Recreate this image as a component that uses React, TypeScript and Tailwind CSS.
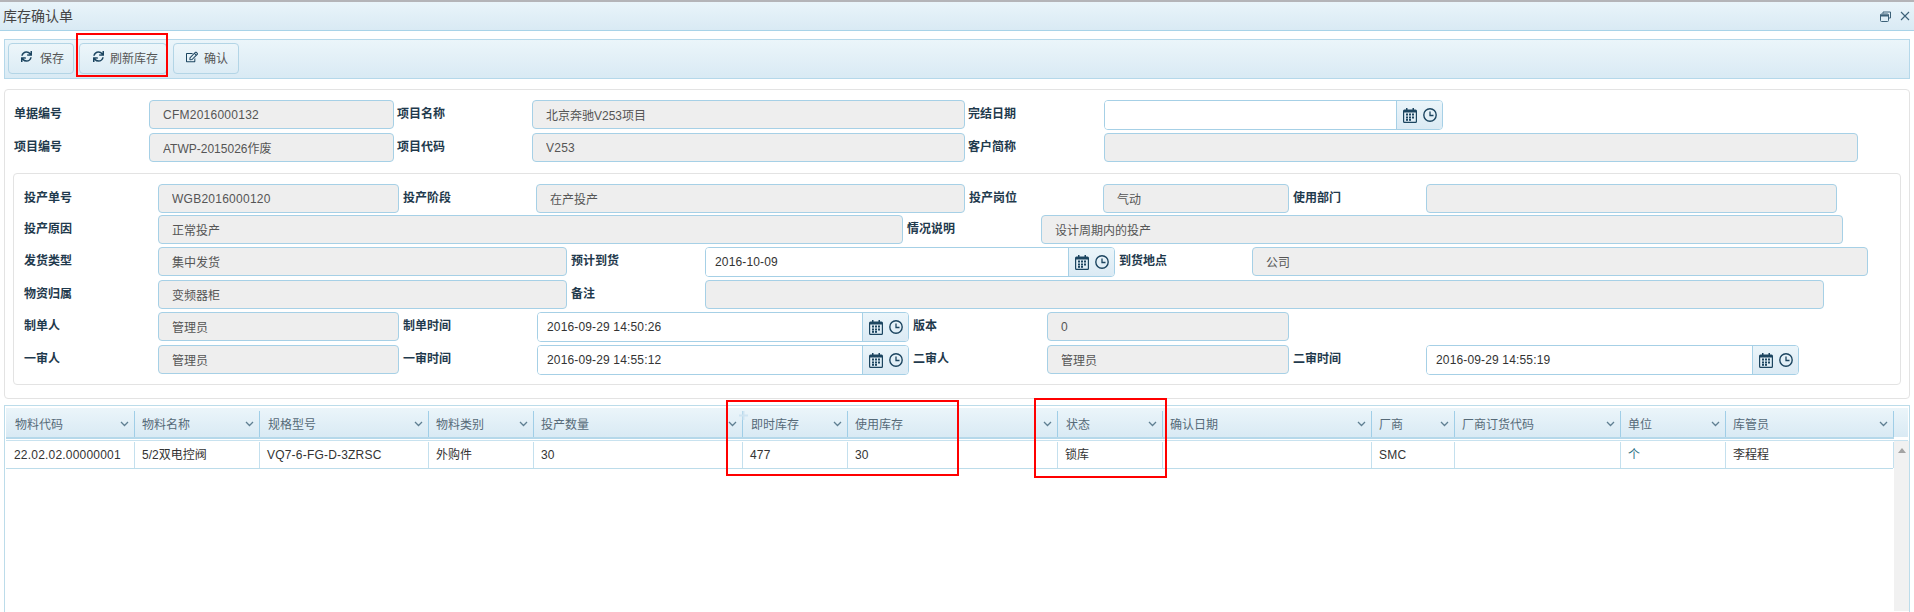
import React from "react";
import { FaSync, FaRegEdit } from "react-icons/fa";

function CalendarIcon() {
  return (
    <svg width="14" height="15" viewBox="0 0 14 15" className="shrink-0 text-[#1c4560]" fill="currentColor">
      <rect x="3" y="0" width="1.5" height="3" />
      <rect x="9.5" y="0" width="1.5" height="3" />
      <path d="M1.5 1.5h11A1.5 1.5 0 0 1 14 3v10.5a1.5 1.5 0 0 1-1.5 1.5h-11A1.5 1.5 0 0 1 0 13.500V3a1.500 1.500 0 0 1 1.500-1.500ZM1.200 4.500V13.300a.5.5 0 0 0 .5.5h10.600a.5.5 0 0 0 .5-.5V4.500Z" fillRule="evenodd" />
      <rect x="3" y="5.500" width="2" height="2" />
      <rect x="6" y="5.500" width="2" height="2" />
      <rect x="9" y="5.500" width="2" height="2" />
      <rect x="3" y="8.500" width="2" height="2" />
      <rect x="6" y="8.500" width="2" height="2" />
      <rect x="9" y="8.500" width="2" height="2" />
      <rect x="3" y="11" width="2" height="1.800" />
      <rect x="6" y="11" width="2" height="1.800" />
    </svg>
  );
}

function ClockIcon() {
  return (
    <svg width="14" height="14" viewBox="0 0 14 14" className="shrink-0 text-[#1c4560]" fill="none" stroke="currentColor">
      <circle cx="7" cy="7" r="6.200" strokeWidth="1.400" />
      <path d="M7 3.500V7.500H10.500" strokeWidth="1.300" />
    </svg>
  );
}

function Chevron() {
  return (
    <svg width="9" height="6" viewBox="0 0 9 6" className="absolute right-[6px] top-[13px] text-[#5f7f92]" fill="none" stroke="currentColor" strokeWidth="1.300">
      <path d="M1 1l3.500 3.500L8 1" />
    </svg>
  );
}

function Label({ className, children }: { className: string; children?: React.ReactNode }) {
  return (
    <label className={`h-[29px] shrink-0 pl-[4px] text-[12px] leading-[28px] font-bold text-[#1f3a4d] whitespace-nowrap ${className}`}>
      {children}
    </label>
  );
}

function Field({ className, value = "", latin = false }: { className: string; value?: string; latin?: boolean }) {
  return (
    <input
      readOnly
      value={value}
      className={`h-[29px] shrink-0 rounded-[4px] border border-[#a6d0e6] bg-[#eeeeee] pl-[13px] text-[12px] text-[#555555] outline-none ${latin ? "tracking-[0.25px]" : ""} ${className}`}
    />
  );
}

function DateField({ className, value = "" }: { className: string; value?: string }) {
  return (
    <div className={`flex h-[30px] shrink-0 overflow-hidden rounded-[4px] border border-[#a6d0e6] bg-white ${className}`}>
      <input
        readOnly
        value={value}
        className="h-full min-w-0 flex-1 bg-white pl-[9px] text-[12px] tracking-[0.15px] text-[#333333] outline-none"
      />
      <div className="flex w-[46px] shrink-0 items-center gap-[6px] border-l border-[#a6d0e6] bg-gradient-to-b from-[#ebf5fa] to-[#dbeaf4] pl-[6px]">
        <CalendarIcon />
        <ClockIcon />
      </div>
    </div>
  );
}

function ToolButton({ className, icon, text }: { className: string; icon: React.ReactNode; text: string }) {
  return (
    <button className={`flex h-[31px] shrink-0 items-center rounded-[4px] border border-[#b3d5e6] bg-gradient-to-b from-[#edf6fa] to-[#dcecf5] text-[12px] text-[#555555] ${className}`}>
      <span className="-translate-y-[2px] text-[#1c4560]">{icon}</span>
      <span>{text}</span>
    </button>
  );
}

const columns = [
  { title: "物料代码", value: "22.02.02.00000001", w: "w-[129px] pl-[8px] text-[#333333]", head: "w-[129px] pl-[9px]", latin: true },
  { title: "物料名称", value: "5/2双电控阀", w: "w-[125px] pl-[7px] text-[#333333]", head: "w-[125px] pl-[7px]" },
  { title: "规格型号", value: "VQ7-6-FG-D-3ZRSC", w: "w-[169px] pl-[7px] text-[#333333]", head: "w-[169px] pl-[8px]", latin: true },
  { title: "物料类别", value: "外购件", w: "w-[105px] pl-[7px] text-[#333333]", head: "w-[105px] pl-[7px]" },
  { title: "投产数量", value: "30", w: "w-[209px] pl-[7px] text-[#333333]", head: "w-[209px] pl-[7px]", latin: true },
  { title: "即时库存", value: "477", w: "w-[105px] pl-[7px] text-[#333333]", head: "w-[105px] pl-[8px]", latin: true, plus: true },
  { title: "使用库存", value: "30", w: "w-[210px] pl-[7px] text-[#333333]", head: "w-[210px] pl-[7px]", latin: true },
  { title: "状态", value: "锁库", w: "w-[105px] pl-[7px] text-[#333333]", head: "w-[105px] pl-[8px]" },
  { title: "确认日期", value: "", w: "w-[209px] pl-[7px] text-[#333333]", head: "w-[209px] pl-[7px]" },
  { title: "厂商", value: "SMC", w: "w-[83px] pl-[7px] text-[#333333]", head: "w-[83px] pl-[7px]", latin: true },
  { title: "厂商订货代码", value: "", w: "w-[166px] pl-[7px] text-[#333333]", head: "w-[166px] pl-[7px]" },
  { title: "单位", value: "个", w: "w-[105px] pl-[7px] text-[#2f7286]", head: "w-[105px] pl-[7px]" },
  { title: "库管员", value: "李程程", w: "w-[168px] pl-[7px] text-[#333333]", head: "w-[168px] pl-[7px]" },
];

export default function App() {
  return (
    <div className="relative h-[612px] w-[1914px] overflow-hidden bg-white font-['Liberation_Sans','Noto_Sans_CJK_SC',sans-serif]">
      <div className="h-[2px] bg-[#b4b4b8]" />
      <header className="flex h-[29px] items-center justify-between border-b border-[#a8d3e8] bg-gradient-to-b from-[#e9f4fa] to-[#d9eaf4] pl-[3px] pr-[4px]">
        <span className="text-[14px] text-[#444444]">库存确认单</span>
        <div className="flex items-center gap-[9px] text-[#3c6178]">
          <svg width="11" height="11" viewBox="0 0 11 11" fill="none" stroke="currentColor">
            <path d="M3 2.500V1h7.500v6H8.500" strokeWidth="1" />
            <rect x="0.500" y="3" width="8" height="7.500" rx="1" strokeWidth="1" />
            <path d="M0.500 4.500h8" strokeWidth="2" />
          </svg>
          <svg width="10" height="10" viewBox="0 0 10 10" fill="none" stroke="currentColor" strokeWidth="1.100">
            <path d="M1 1l8 8M9 1l-8 8" />
          </svg>
        </div>
      </header>

      <div className="mx-[4px] mt-[8px] flex h-[40px] items-start gap-[5px] border border-[#b5d8ea] bg-gradient-to-b from-[#ebf5fa] to-[#d9eaf4] pl-[3px] pt-[3px]">
        <ToolButton className="w-[66px] gap-[8px] pl-[12px]" icon={<FaSync size={11} />} text="保存" />
        <ToolButton className="w-[88px] gap-[6px] pl-[13px]" icon={<FaSync size={11} />} text="刷新库存" />
        <ToolButton className="ml-[1px] w-[66px] gap-[6px] pl-[12px]" icon={<FaRegEdit size={12} />} text="确认" />
      </div>

      <section className="mx-[4px] mt-[10px] h-[310px] rounded-[4px] border border-[#e3e3e3] px-[8px] pt-[10px]">
        <div className="flex -ml-[8px] items-start pl-[9px]">
          <Label className="w-[135px] !pl-0">单据编号</Label>
          <Field className="w-[245px]" value="CFM2016000132" latin />
          <Label className="w-[138px] !pl-[3px]">项目名称</Label>
          <Field className="w-[433px]" value="北京奔驰V253项目" />
          <Label className="w-[139px] !pl-[3px]">完结日期</Label>
          <DateField className="w-[339px]" />
        </div>
        <div className="-ml-[8px] mt-[3px] flex items-start pl-[9px]">
          <Label className="w-[135px] !pl-0">项目编号</Label>
          <Field className="w-[245px]" value="ATWP-2015026作废" />
          <Label className="w-[138px] !pl-[3px]">项目代码</Label>
          <Field className="w-[433px]" value="V253" latin />
          <Label className="w-[139px] !pl-[3px]">客户简称</Label>
          <Field className="w-[754px]" />
        </div>

        <div className="mt-[11px] h-[212px] w-[1888px] rounded-[4px] border border-[#e3e3e3] pl-[10px] pt-[10px]">
          <div className="flex items-start">
            <Label className="w-[134px] !pl-0">投产单号</Label>
            <Field className="w-[241px]" value="WGB2016000120" latin />
            <Label className="w-[137px]">投产阶段</Label>
            <Field className="w-[429px]" value="在产投产" />
            <Label className="w-[138px]">投产岗位</Label>
            <Field className="w-[186px]" value="气动" />
            <Label className="w-[137px]">使用部门</Label>
            <Field className="w-[411px]" />
          </div>
          <div className="mt-[2px] flex items-start">
            <Label className="w-[134px] !pl-0">投产原因</Label>
            <Field className="w-[745px]" value="正常投产" />
            <Label className="w-[138px]">情况说明</Label>
            <Field className="w-[802px]" value="设计周期内的投产" />
          </div>
          <div className="mt-[3px] flex items-start">
            <Label className="w-[134px] !pl-0">发货类型</Label>
            <Field className="w-[409px]" value="集中发货" />
            <Label className="w-[138px]">预计到货</Label>
            <DateField className="w-[410px]" value="2016-10-09" />
            <Label className="w-[137px]">到货地点</Label>
            <Field className="w-[616px]" value="公司" />
          </div>
          <div className="mt-[3px] flex items-start">
            <Label className="w-[134px] !pl-0">物资归属</Label>
            <Field className="w-[409px]" value="变频器柜" />
            <Label className="w-[138px]">备注</Label>
            <Field className="w-[1119px]" />
          </div>
          <div className="mt-[3px] flex items-start">
            <Label className="w-[134px] !pl-0">制单人</Label>
            <Field className="w-[241px]" value="管理员" />
            <Label className="w-[138px]">制单时间</Label>
            <DateField className="w-[372px]" value="2016-09-29 14:50:26" />
            <Label className="w-[138px]">版本</Label>
            <Field className="w-[242px]" value="0" />
          </div>
          <div className="mt-[3px] flex items-start">
            <Label className="w-[134px] !pl-0">一审人</Label>
            <Field className="w-[241px]" value="管理员" />
            <Label className="w-[138px]">一审时间</Label>
            <DateField className="w-[372px]" value="2016-09-29 14:55:12" />
            <Label className="w-[138px]">二审人</Label>
            <Field className="w-[242px]" value="管理员" />
            <Label className="w-[137px]">二审时间</Label>
            <DateField className="w-[373px]" value="2016-09-29 14:55:19" />
          </div>
        </div>
      </section>

      <section className="mx-[4px] mt-[6px] h-[207px] border border-b-0 border-[#bcdcea] pt-[2px] pl-[1px]">
        <div className="flex h-[29px] w-[1902px] bg-gradient-to-b from-[#ebf5fa] to-[#d9eaf4]">
          {columns.map((c) => (
            <div key={c.title} className={`relative shrink-0 text-[12px] leading-[35px] text-[#566a78] ${c.head}`}>
              {c.title}
              <Chevron />
              <span className="absolute bottom-0 right-0 top-[3px] w-px bg-[#a0cee7]" />
              {c.plus && (
                <svg width="9" height="9" viewBox="0 0 9 9" className="absolute -left-[4px] top-[3px] text-[#cfe4f1]" stroke="currentColor" strokeWidth="2">
                  <path d="M4.500 0v9M0 4.500h9" />
                </svg>
              )}
            </div>
          ))}
        </div>
        <div className="h-[2px] w-[1888px] bg-[#b5d8ea]" />
        <div className="mt-px h-px w-[1902px] bg-[#c8e2ef]" />
        <div className="flex">
          <div className="flex-1">
            <div className="flex h-[28px] w-[1887px] border-b border-[#bcdcea] pt-px">
              {columns.map((c) => (
                <div
                  key={c.title}
                  className={`shrink-0 border-r border-[#c4e0ee] text-[12px] leading-[26px] ${c.latin ? "tracking-[0.2px]" : ""} ${c.w}`}
                >
                  {c.value}
                </div>
              ))}
            </div>
          </div>
          <div className="flex h-[170px] w-[15px] shrink-0 justify-center bg-[#f1f1f1] pt-[7px]">
            <span className="h-0 w-0 border-x-[4px] border-b-[5px] border-x-transparent border-b-[#a3a3a3]" />
          </div>
        </div>
      </section>

      <div className="pointer-events-none absolute left-[76px] top-[33px] h-[44px] w-[92px] border-2 border-[#ff0000]" />
      <div className="pointer-events-none absolute left-[726px] top-[400px] h-[76px] w-[233px] border-2 border-[#ff0000]" />
      <div className="pointer-events-none absolute left-[1034px] top-[398px] h-[80px] w-[133px] border-2 border-[#ff0000]" />
    </div>
  );
}
